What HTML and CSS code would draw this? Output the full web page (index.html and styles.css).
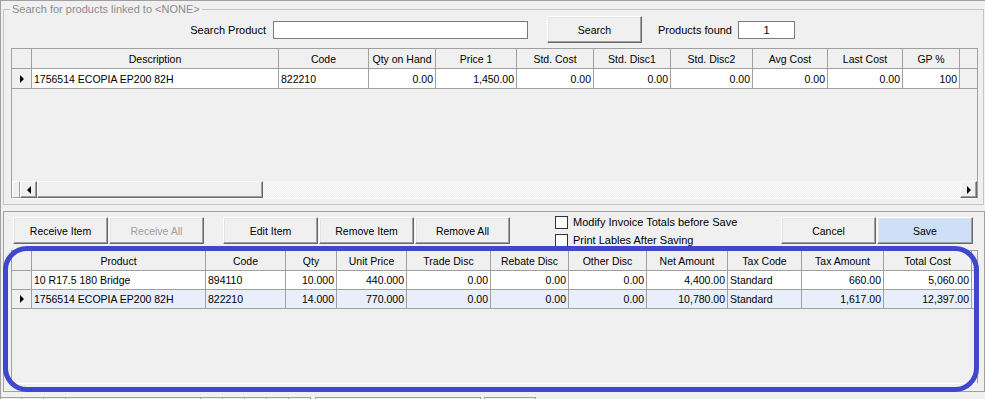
FILE: index.html
```html
<!DOCTYPE html>
<html>
<head>
    <title>Receive Stock</title>
    <link rel="stylesheet" href="styles.css">
</head>
<body>
    <div class="app">
        <fieldset class="search-group">
            <legend>Search for products linked to &lt;NONE&gt;</legend>
            <div class="search-row">
                <label class="search-label" for="searchProduct">Search Product</label>
                <input type="text" id="searchProduct" class="textbox search-input">
                <button class="btn search-btn">Search</button>
                <label class="found-label" for="foundCount">Products found</label>
                <input type="text" id="foundCount" class="textbox found-input" value="1">
            </div>
            <div class="grid products-grid">
                <div class="grid-row grid-head">
                    <div class="cell"></div>
                    <div class="cell">Description</div>
                    <div class="cell">Code</div>
                    <div class="cell">Qty on Hand</div>
                    <div class="cell">Price 1</div>
                    <div class="cell">Std. Cost</div>
                    <div class="cell">Std. Disc1</div>
                    <div class="cell">Std. Disc2</div>
                    <div class="cell">Avg Cost</div>
                    <div class="cell">Last Cost</div>
                    <div class="cell">GP %</div>
                    <div class="cell filler"></div>
                </div>
                <div class="grid-row grid-data">
                    <div class="cell indicator"><span class="arrow"></span></div>
                    <div class="cell">1756514 ECOPIA EP200 82H</div>
                    <div class="cell">822210</div>
                    <div class="cell num">0.00</div>
                    <div class="cell num">1,450.00</div>
                    <div class="cell num">0.00</div>
                    <div class="cell num">0.00</div>
                    <div class="cell num">0.00</div>
                    <div class="cell num">0.00</div>
                    <div class="cell num">0.00</div>
                    <div class="cell num">100</div>
                    <div class="cell filler"></div>
                </div>
                <div class="grid-space"></div>
                <div class="hscroll">
                    <div class="hscroll-corner"></div>
                    <div class="sb-btn"><span class="sb-left"></span></div>
                    <div class="sb-thumb"></div>
                    <div class="sb-track"></div>
                    <div class="sb-btn"><span class="sb-right"></span></div>
                </div>
            </div>
        </fieldset>

        <div class="lines-panel">
            <div class="actions">
                <button class="btn">Receive Item</button>
                <button class="btn btn-tight" disabled>Receive All</button>
                <button class="btn btn-group">Edit Item</button>
                <button class="btn btn-tight">Remove Item</button>
                <button class="btn btn-tight">Remove All</button>
                <div class="checks">
                    <label class="check-row"><span class="checkbox"></span>Modify Invoice Totals before Save</label>
                    <label class="check-row"><span class="checkbox"></span>Print Lables After Saving</label>
                </div>
                <button class="btn cancel-btn">Cancel</button>
                <button class="btn btn-tight save-btn">Save</button>
            </div>
            <div class="grid lines-grid">
                <div class="grid-row grid-head">
                    <div class="cell"></div>
                    <div class="cell">Product</div>
                    <div class="cell">Code</div>
                    <div class="cell">Qty</div>
                    <div class="cell">Unit Price</div>
                    <div class="cell">Trade Disc</div>
                    <div class="cell">Rebate Disc</div>
                    <div class="cell">Other Disc</div>
                    <div class="cell">Net Amount</div>
                    <div class="cell">Tax Code</div>
                    <div class="cell">Tax Amount</div>
                    <div class="cell">Total Cost</div>
                    <div class="cell filler"></div>
                </div>
                <div class="grid-row grid-data">
                    <div class="cell indicator"></div>
                    <div class="cell">10 R17.5 180 Bridge</div>
                    <div class="cell">894110</div>
                    <div class="cell num">10.000</div>
                    <div class="cell num">440.000</div>
                    <div class="cell num">0.00</div>
                    <div class="cell num">0.00</div>
                    <div class="cell num">0.00</div>
                    <div class="cell num">4,400.00</div>
                    <div class="cell">Standard</div>
                    <div class="cell num">660.00</div>
                    <div class="cell num">5,060.00</div>
                    <div class="cell filler"></div>
                </div>
                <div class="grid-row grid-data current">
                    <div class="cell indicator"><span class="arrow"></span></div>
                    <div class="cell">1756514 ECOPIA EP200 82H</div>
                    <div class="cell">822210</div>
                    <div class="cell num">14.000</div>
                    <div class="cell num">770.000</div>
                    <div class="cell num">0.00</div>
                    <div class="cell num">0.00</div>
                    <div class="cell num">0.00</div>
                    <div class="cell num">10,780.00</div>
                    <div class="cell">Standard</div>
                    <div class="cell num">1,617.00</div>
                    <div class="cell num">12,397.00</div>
                    <div class="cell filler"></div>
                </div>
            </div>
        </div>

        <div class="tabs">
            <span class="tab"></span><span class="tab"></span><span class="tab"></span>
            <span class="tab tab-wide"></span><span class="tab"></span><span class="tab"></span>
            <span class="tab"></span><span class="tab"></span><span class="tab"></span>
            <span class="tab tab-box"></span>
            <span class="tab tab-small"></span>
        </div>

        <div class="highlight"></div>
    </div>
</body>
</html>
```

FILE: styles.css
```css
* {
    box-sizing: border-box;
}

body {
    margin: 0;
    background-color: #f0f0f0;
    color: #000000;
    font-family: "Liberation Sans", Arial, sans-serif;
    font-size: 11px;
}

.app {
    position: relative;
    width: 985px;
    height: 399px;
    padding-left: 2px;
    border-top: 1px solid #a0a0a0;
    border-left: 1px solid #a0a0a0;
    overflow: hidden;
}

/* search group box */
.search-group {
    width: 981px;
    min-width: 0;
    margin: 1px 0 0 0;
    padding: 0 0 5px 0;
    border: 1px solid #c4c4c4;
}

.search-group legend {
    margin-left: 6px;
    padding: 0 2px;
    line-height: 15px;
    color: #8c8c8c;
}

.search-row {
    display: flex;
    align-items: center;
    height: 27px;
    margin-top: -1px;
}

.search-label {
    width: 262px;
    text-align: right;
}

.textbox {
    height: 18px;
    padding: 0 2px;
    border: 1px solid #7a7a7a;
    background-color: #ffffff;
    font-family: inherit;
    font-size: 11px;
}

.search-input {
    width: 255px;
    margin-left: 7px;
}

.search-btn {
    margin-left: 19px;
}

.found-label {
    margin-left: 16px;
}

.found-input {
    width: 57px;
    margin-left: 6px;
    text-align: center;
}

/* buttons */
.btn {
    width: 95px;
    height: 27px;
    padding: 0;
    border: 1px solid;
    border-color: #ffffff #696969 #696969 #ffffff;
    box-shadow: inset -1px -1px 0 #a0a0a0, inset 1px 1px 0 #e3e3e3;
    background-color: #f0f0f0;
    color: #000000;
    font-family: inherit;
    font-size: 10.5px;
}

.btn:disabled {
    color: #a0a0a0;
}

/* data grids */
.grid {
    display: flex;
    flex-direction: column;
    width: 967px;
    margin-left: 7px;
    border: 1px solid #a0a0a0;
    border-bottom-color: #ffffff;
}

.products-grid {
    height: 151px;
    margin-top: 5px;
}

.products-grid .grid-row {
    grid-template-columns: 20px 247px 90px 67px 81px 77px 77px 82px 75px 75px 57px 17px;
}

.lines-grid {
    height: 134px;
}

.lines-grid .grid-row {
    grid-template-columns: 20px 174px 80px 51px 70px 84px 78px 78px 81px 74px 82px 88px 5px;
}

.grid-row {
    display: grid;
    height: 20px;
}

.lines-grid .grid-data {
    height: 19px;
}

.cell {
    display: flex;
    align-items: center;
    overflow: hidden;
    padding: 0 2px;
    border-right: 1px solid #a0a0a0;
    border-bottom: 1px solid #a0a0a0;
    white-space: nowrap;
}

.grid-head .cell {
    justify-content: center;
    background-color: #f0f0f0;
    font-size: 10.5px;
}

.grid-data .cell {
    background-color: #ffffff;
    font-size: 10.5px;
}

.grid-data .indicator {
    padding-left: 8px;
    background-color: #f0f0f0;
}

.grid-data.current .cell {
    background-color: #e8eefa;
}

.grid-data.current .indicator {
    background-color: #f0f0f0;
}

.cell.num {
    justify-content: flex-end;
}

.cell.filler {
    border-right: none;
    background-color: #f0f0f0 !important;
}

.arrow {
    width: 0;
    height: 0;
    border-top: 4px solid transparent;
    border-bottom: 4px solid transparent;
    border-left: 4px solid #000000;
}

.grid-space {
    flex: 1;
}

/* horizontal scrollbar */
.hscroll {
    display: flex;
    height: 17px;
}

.hscroll-corner {
    width: 8px;
    border: 1px solid;
    border-color: #ffffff #a0a0a0 #a0a0a0 #ffffff;
}

.sb-btn,
.sb-thumb {
    display: flex;
    align-items: center;
    justify-content: center;
    width: 17px;
    border: 1px solid;
    border-color: #ffffff #696969 #696969 #ffffff;
    box-shadow: inset -1px -1px 0 #a0a0a0;
    background-color: #f0f0f0;
}

.sb-thumb {
    width: 226px;
}

.sb-track {
    flex: 1;
    background: repeating-conic-gradient(#f0f0f0 0 25%, #fafafa 0 50%) 0 0 / 2px 2px;
}

.sb-left,
.sb-right {
    width: 0;
    height: 0;
    border-top: 4px solid transparent;
    border-bottom: 4px solid transparent;
}

.sb-left {
    border-right: 4px solid #000000;
}

.sb-right {
    border-left: 4px solid #000000;
}

/* lower panel */
.lines-panel {
    width: 982px;
    height: 181px;
    margin-top: 6px;
    border: 1px solid #a0a0a0;
}

.actions {
    display: flex;
    align-items: flex-start;
    height: 38px;
    padding-left: 9px;
}

.actions .btn {
    margin-top: 5px;
}

.btn-tight {
    margin-left: 1px;
}

.btn-group {
    margin-left: 19px;
}

.checks {
    margin-top: 1px;
    margin-left: 45px;
}

.check-row {
    display: flex;
    align-items: center;
    height: 18px;
}

.checkbox {
    width: 13px;
    height: 13px;
    margin-right: 5px;
    border: 1px solid #333333;
    background-color: #ffffff;
}

.cancel-btn {
    margin-left: auto;
}

.save-btn {
    width: 96px;
    margin-right: 11px;
    background-color: #cfdff7;
}

/* tab strip at the bottom */
.tabs {
    display: flex;
    height: 2px;
    margin-top: 5px;
    margin-left: -3px;
}

.tab {
    width: 22px;
    border-top: 1px solid #a0a0a0;
    border-right: 1px solid #a0a0a0;
}

.tab-wide {
    width: 135px;
}

.tab-box {
    width: 166px;
    margin-left: 4px;
    border-left: 1px solid #a0a0a0;
}

.tab-small {
    width: 52px;
    margin-left: 3px;
    border-left: 1px solid #a0a0a0;
}

/* annotation drawn over the lines grid */
.highlight {
    position: absolute;
    left: 2px;
    top: 245px;
    width: 976px;
    height: 146px;
    border: 5px solid #3f48cc;
    border-radius: 24px;
    pointer-events: none;
}
```
